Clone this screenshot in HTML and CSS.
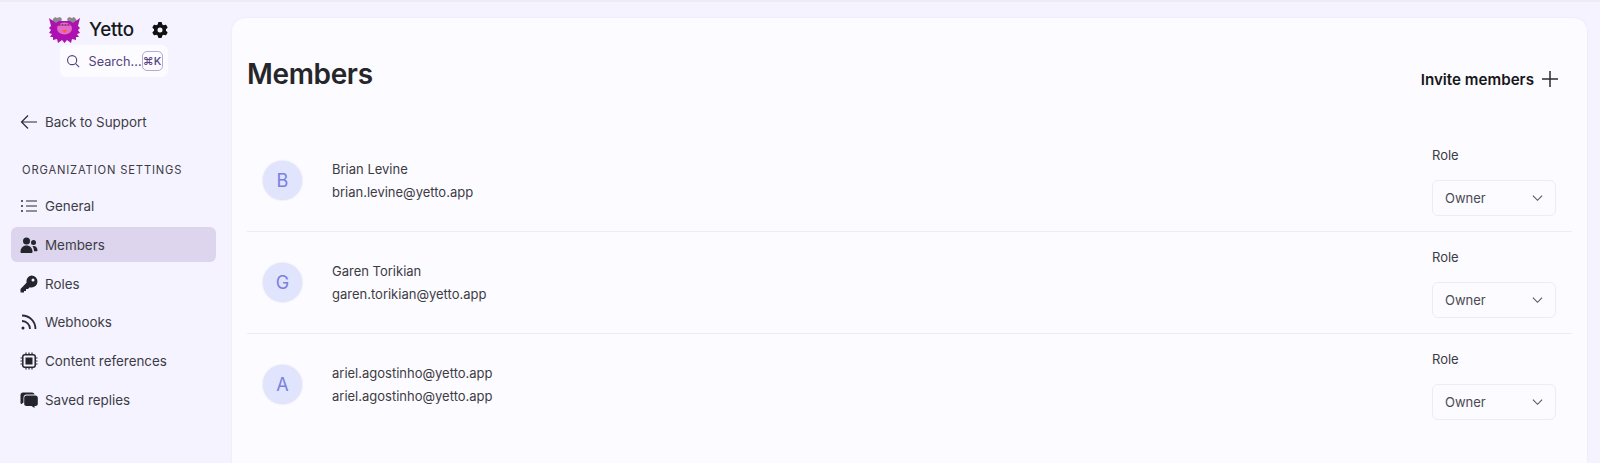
FILE: index.html
```html
<!DOCTYPE html>
<html lang="en">
<head>
<meta charset="utf-8">
<title>Members</title>
<link rel="stylesheet" href="styles.css">
</head>
<body>
<div class="app">
  <aside class="sidebar">
    <div class="brand">
      <svg class="logo" viewBox="0 0 31 28" aria-hidden="true">
        <path d="M3 6l1-3 2-2 2 1 3-1 2 2-1 3-3 2zM28 6l-1-3-2-2-2 1-3-1-2 2 1 3 3 2z" fill="#8d8790"/>
        <path d="M0 2L7 7 10 5H21L24 7 31 2 29 10 31 12 29 14 31 17 28 18 30 21 27 21 27 24 23 23 22 27 18 24 15.500 27 13 24 9 27 8 23 4 24 4 21 1 21 3 18 0 17 2 14 0 12 2 10Z" fill="#ab12b0"/>
        <ellipse cx="15.500" cy="12.500" rx="7.500" ry="6" fill="#e56ac8"/>
        <path d="M9.500 9h12" stroke="#3d0a3d" stroke-width="1.200" stroke-dasharray="2 1"/>
        <path d="M13 14h5l-2.500 3z" fill="#f0622a"/>
      </svg>
      <span class="brand-name">Yetto</span>
      <svg class="gear" viewBox="0 0 512 512" aria-hidden="true">
        <path fill="#111" fill-rule="evenodd" d="M495.900 166.600c3.200 8.700.5 18.400-6.400 24.600l-43.300 39.400c1.100 8.300 1.700 16.800 1.700 25.400s-.6 17.100-1.700 25.400l43.300 39.400c6.900 6.200 9.600 15.900 6.400 24.600-4.400 11.900-9.700 23.300-15.800 34.300l-4.700 8.100c-6.600 11-14 21.400-22.100 31.200-5.900 7.200-15.700 9.600-24.500 6.800l-55.700-17.700c-13.400 10.300-28.200 18.900-44 25.400l-12.500 57.100c-2 9.100-9 16.300-18.200 17.800-13.800 2.300-28 3.500-42.500 3.500s-28.700-1.200-42.500-3.500c-9.200-1.500-16.200-8.700-18.200-17.800l-12.500-57.100c-15.800-6.500-30.600-15.100-44-25.400l-55.600 17.800c-8.800 2.800-18.600.3-24.500-6.800-8.100-9.800-15.500-20.200-22.100-31.200l-4.700-8.100c-6.100-11-11.400-22.400-15.800-34.300-3.200-8.700-.5-18.400 6.400-24.600l43.300-39.400c-1.100-8.400-1.700-16.900-1.700-25.500s.6-17.100 1.700-25.400l-43.300-39.400c-6.900-6.200-9.600-15.900-6.400-24.600 4.400-11.900 9.700-23.300 15.800-34.300l4.700-8.100c6.600-11 14-21.400 22.100-31.200 5.900-7.200 15.700-9.600 24.500-6.800l55.700 17.700c13.400-10.300 28.200-18.900 44-25.400l12.500-57.100c2-9.100 9-16.300 18.200-17.800C227.300 1.200 241.500 0 256 0s28.700 1.200 42.500 3.500c9.200 1.500 16.200 8.700 18.200 17.800l12.500 57.100c15.800 6.500 30.600 15.100 44 25.400l55.700-17.700c8.800-2.800 18.600-.3 24.500 6.800 8.100 9.800 15.500 20.200 22.100 31.200l4.700 8.100c6.100 11 11.400 22.400 15.800 34.300zM256 336a80 80 0 1 0 0-160 80 80 0 1 0 0 160z"/>
      </svg>
    </div>
    <div class="search">
      <svg class="search-icon" viewBox="0 0 16 16" aria-hidden="true"><circle cx="7" cy="7" r="5.200"/><path d="M11 11l4 4"/></svg>
      <span class="search-text">Search...</span>
      <kbd class="kbd">⌘K</kbd>
    </div>
    <a class="back nav-item">
      <svg class="nav-icon" viewBox="0 0 18 18" aria-hidden="true"><path class="stroke" d="M1.500 9h15.500M8 2.500L1.500 9 8 15.500"/></svg>
      <span>Back to Support</span>
    </a>
    <div class="section-title">ORGANIZATION SETTINGS</div>
    <nav class="nav">
      <a class="nav-item">
        <svg class="nav-icon" viewBox="0 0 18 18" aria-hidden="true"><path class="stroke" d="M6 4h11M6 9h11M6 14h11"/><path d="M1 3.200h2v1.600H1zM1 8.200h2v1.600H1zM1 13.200h2v1.600H1z" fill="#2b2b33"/></svg>
        <span>General</span>
      </a>
      <a class="nav-item active">
        <svg class="nav-icon" viewBox="0 0 18 18" aria-hidden="true"><g fill="#24242c"><circle cx="6.500" cy="5" r="3.500"/><path d="M0.500 16c0-4 2.500-6.500 6-6.500s6 2.500 6 6.500c0 .6-.4 1-1 1h-10c-.6 0-1-.4-1-1z"/><circle cx="13.500" cy="6.500" r="2.500"/><path d="M13.500 10c2.500 0 4 2 4 4.500 0 .5-.3.800-.8.800h-2.700c0-2-.5-3.800-1.700-5.200z"/></g></svg>
        <span>Members</span>
      </a>
      <a class="nav-item">
        <svg class="nav-icon" viewBox="0 0 18 18" aria-hidden="true"><path fill="#24242c" fill-rule="evenodd" d="M11.500.500a6 6 0 0 1 0 12c-.6 0-1.200-.1-1.800-.3L8 14H6v2H4v1.500H1a.5.500 0 0 1-.5-.5v-3l6-6.300A6 6 0 0 1 11.500.500zm1.500 3a1.500 1.500 0 1 0 0 3 1.500 1.500 0 0 0 0-3z"/></svg>
        <span>Roles</span>
      </a>
      <a class="nav-item">
        <svg class="nav-icon" viewBox="0 0 18 18" aria-hidden="true"><path class="stroke thick" d="M2 2.500c7.500 0 13.500 6 13.500 13.500M2 8c4.500 0 8 3.500 8 8"/><circle cx="3" cy="15" r="1.500" fill="#24242c"/></svg>
        <span>Webhooks</span>
      </a>
      <a class="nav-item">
        <svg class="nav-icon" viewBox="0 0 18 18" aria-hidden="true"><rect x="2.800" y="2.800" width="12.400" height="12.400" rx="2" fill="none" stroke="#24242c" stroke-width="1.500"/><rect x="5.500" y="5.500" width="7" height="7" fill="#24242c"/><path class="stroke" d="M6 .5v2M9 .5v2M12 .5v2M6 15.500v2M9 15.500v2M12 15.500v2M.5 6h2M.5 9h2M.5 12h2M15.500 6h2M15.500 9h2M15.500 12h2"/></svg>
        <span>Content references</span>
      </a>
      <a class="nav-item">
        <svg class="nav-icon" viewBox="0 0 18 18" aria-hidden="true"><path fill="#24242c" d="M3 1.500h9c1.500 0 2.500 1 2.500 2H6.500C4.500 3.500 3.500 5 3.500 6.500v5L1.500 13c-.5 0-1-.5-1-1V4C.5 2.500 1.500 1.500 3 1.500z"/><path fill="#24242c" d="M6.500 4.500h9c1.300 0 2.300 1 2.300 2.300v5.900c0 1.300-1 2.300-2.300 2.300h-1v2l-3-2h-5c-1.300 0-2.300-1-2.300-2.300V6.800c0-1.300 1-2.300 2.300-2.300z"/></svg>
        <span>Saved replies</span>
      </a>
    </nav>
  </aside>
  <main class="card">
    <header class="card-head">
      <h1 class="title">Members</h1>
      <a class="invite">
        <span>Invite members</span>
        <svg class="plus" viewBox="0 0 16 16" aria-hidden="true"><path d="M8 0v16M0 8h16"/></svg>
      </a>
    </header>
    <ul class="members">
      <li class="member">
        <div class="avatar">B</div>
        <div class="who"><div>Brian Levine</div><div>brian.levine@yetto.app</div></div>
        <div class="role">
          <label class="role-label">Role</label>
          <div class="select"><span>Owner</span><svg class="chev" viewBox="0 0 12 8" aria-hidden="true"><path d="M1 1.500l5 5 5-5"/></svg></div>
        </div>
      </li>
      <li class="member">
        <div class="avatar">G</div>
        <div class="who"><div>Garen Torikian</div><div>garen.torikian@yetto.app</div></div>
        <div class="role">
          <label class="role-label">Role</label>
          <div class="select"><span>Owner</span><svg class="chev" viewBox="0 0 12 8" aria-hidden="true"><path d="M1 1.500l5 5 5-5"/></svg></div>
        </div>
      </li>
      <li class="member">
        <div class="avatar">A</div>
        <div class="who"><div>ariel.agostinho@yetto.app</div><div>ariel.agostinho@yetto.app</div></div>
        <div class="role">
          <label class="role-label">Role</label>
          <div class="select"><span>Owner</span><svg class="chev" viewBox="0 0 12 8" aria-hidden="true"><path d="M1 1.500l5 5 5-5"/></svg></div>
        </div>
      </li>
    </ul>
  </main>
</div>
</body>
</html>
```
FILE: styles.css
```css
* { box-sizing: border-box; }
html, body { margin: 0; height: 100%; overflow: hidden; }
body {
  background: #f5f3ff;
  font-family: Inter, "Noto Sans", sans-serif;
  color: #3c3c44;
  border-top: 2px solid #eeecf2;
}
.app { display: flex; height: 461px; }
.sidebar { width: 232px; flex: none; padding: 12px 16px 0 11px; }
.brand { display: flex; align-items: center; height: 31px; padding-left: 38px; }
.logo { width: 31px; height: 28px; flex: none; }
.brand-name { margin-left: 9px; font-size: 18.800px; font-weight: 500; color: #18181c; letter-spacing: -.2px; }
.gear { width: 16px; height: 16px; margin-left: 18px; flex: none; }
.search {
  display: flex; align-items: center; width: 108px; height: 32px; margin: 0 0 0 49px;
  background: #fcfbff; border-radius: 6px; padding-left: 6px;
  color: #54427e; font-size: 12.700px;
}
.search-icon { width: 14px; height: 14px; fill: none; stroke: #54427e; stroke-width: 1.300; flex: none; }
.search-text { margin-left: 8.500px; white-space: nowrap; }
.kbd {
  display: flex; align-items: center; justify-content: center; width: 21px; height: 20px; flex: none;
  margin-left: 0; border: 1px solid #b7a8d4; border-radius: 5px; background: #fcfbff;
  font: 500 11px Inter, sans-serif; color: #54427e;
}
.nav-item {
  display: flex; align-items: center; gap: 7.500px; height: 35px; padding-left: 8.500px; border-radius: 6px;
  font-size: 13.400px; color: #3c3c44;
}
.nav-icon { width: 18px; height: 18px; flex: none; }
.stroke { fill: none; stroke: #2b2b33; stroke-width: 1.200; }
.stroke.thick { stroke-width: 1.800; }
.back { margin-top: 27px; }
.section-title { margin: 24px 0 0 11px; font-size: 11.200px; letter-spacing: .85px; line-height: 14px; color: #3c3c44; }
.nav { display: flex; flex-direction: column; gap: 3.800px; margin-top: 11.500px; }
.active { background: #ddd5ee; }
.card {
  flex: 1; margin: 16px 13px 0 0; padding: 0 15px; background: #fcfbff;
  border-radius: 14px 14px 0 0; box-shadow: 0 0 3px rgba(120, 100, 180, .08);
}
.card-head { display: flex; align-items: center; justify-content: space-between; height: 112px; padding-top: 0; }
.title { margin: 0; font-size: 28px; font-weight: 600; color: #26262a; letter-spacing: -.35px; }
.invite { display: flex; align-items: center; gap: 8px; padding: 10px 14px 0 0; font-size: 15.200px; font-weight: 600; color: #17171b; }
.plus { width: 16px; height: 16px; stroke: #2b2b33; stroke-width: 1.500; fill: none; }
.members { list-style: none; margin: 0; padding: 0; }
.member { display: flex; align-items: center; height: 102px; padding: 0 15px 0 16px; border-bottom: 1px solid #eeecf2; }
.member:last-child { border-bottom-color: transparent; }
.avatar {
  display: flex; align-items: center; justify-content: center; width: 39px; height: 39px; border-radius: 50%; flex: none;
  background: #e1e4fd; color: #7a80e0; font-size: 18px; box-shadow: 0 0 2px rgba(100, 100, 160, .25);
}
.who { flex: 1; margin-left: 30px; font-size: 13px; line-height: 23px; color: #3c3c44; }
.role { width: 125px; flex: none; padding-top: 2px; }
.role-label { display: block; font-size: 13px; line-height: 16px; margin-bottom: 17px; color: #3c3c44; }
.select {
  display: flex; align-items: center; justify-content: space-between; width: 124px; height: 36px; padding: 0 12px;
  border: 1px solid #eeecf2; border-radius: 6px; background: #fcfbff; font-size: 13px; color: #4a4a52;
}
.chev { width: 11px; height: 8px; fill: none; stroke: #55555f; stroke-width: 1.200; }
```
